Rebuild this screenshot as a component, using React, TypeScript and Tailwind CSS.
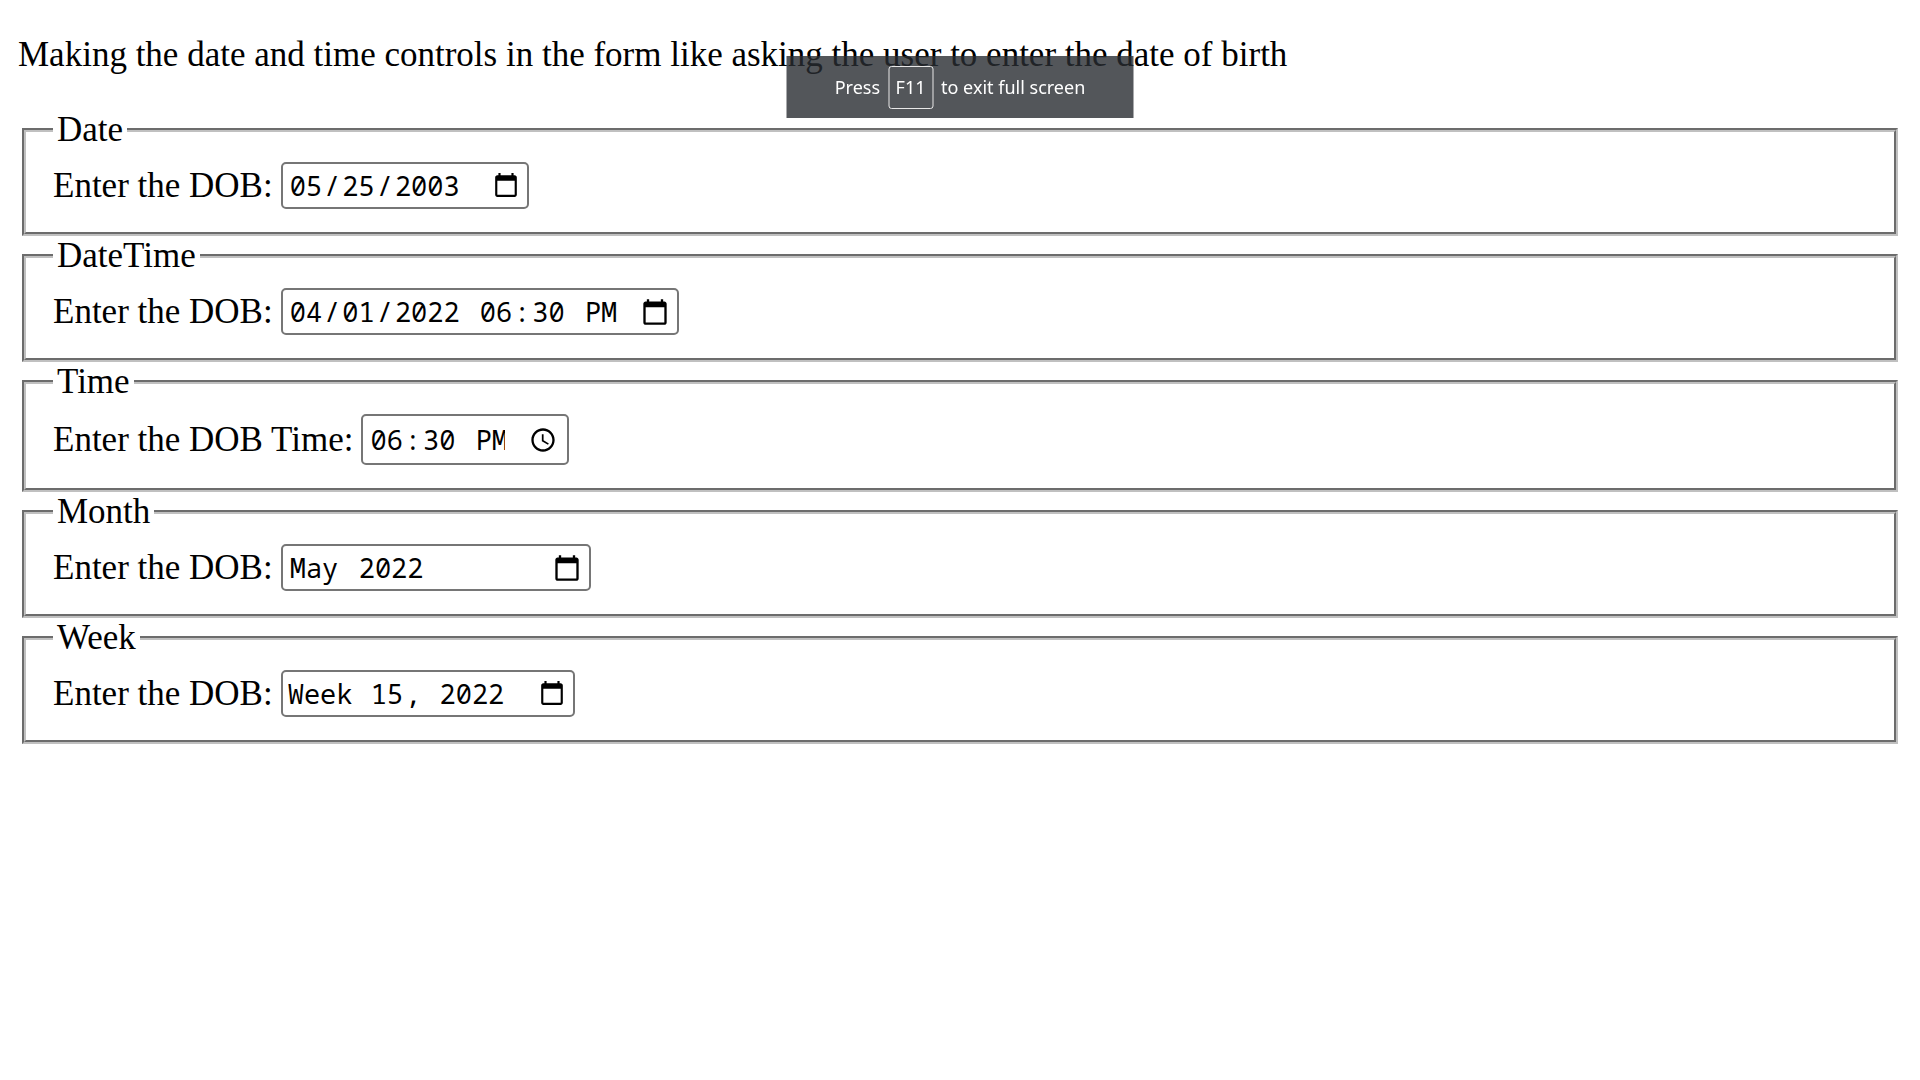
import React from 'react';

const mono = 'font-["Noto_Sans_Mono","DejaVu_Sans_Mono",monospace] text-[27px] leading-[43px] text-black';
const fields =
  '[&::-webkit-datetime-edit-month-field]:px-[2px] [&::-webkit-datetime-edit-day-field]:px-[2px] [&::-webkit-datetime-edit-year-field]:px-[2px] [&::-webkit-datetime-edit-hour-field]:px-[2px] [&::-webkit-datetime-edit-minute-field]:px-[2px] [&::-webkit-datetime-edit-ampm-field]:px-[2px] [&::-webkit-datetime-edit-week-field]:px-[2px]';
const picker = '[&::-webkit-calendar-picker-indicator]:size-[28px]';
const frame = 'rounded-[5px] border-2 border-[#767676] bg-white';

function Group({ title, children }: { title: string; children: React.ReactNode }) {
  return (
    <fieldset className="mx-1 border-4 border-[#c0c0c0] px-[27px] pt-3 pb-[23px] [border-style:groove]">
      <legend className="px-1">{title}</legend>
      <div className="flex items-center gap-2">{children}</div>
    </fieldset>
  );
}

function CalendarButton({ label }: { label: string }) {
  return (
    <button type="button" aria-label={label} className="shrink-0">
      <svg viewBox="0 0 24 24" className="size-[28px]" fill="black">
        <path d="M20 3h-1V1h-2v2H7V1H5v2H4c-1.1 0-2 .9-2 2v16c0 1.1.9 2 2 2h16c1.1 0 2-.9 2-2V5c0-1.1-.9-2-2-2zm0 18H4V8h16v13z" />
      </svg>
    </button>
  );
}

export default function App() {
  return (
    <main className="px-[18px] pt-[35px] font-['Liberation_Serif',serif] text-[35px] leading-[40px] text-black">
      <p className="mb-[35px]">
        Making the date and time controls in the form like asking the user to enter the date of birth
      </p>
      <form>
        <Group title="Date">
          <label htmlFor="date">Enter the DOB:</label>
          <input
            id="date"
            type="date"
            defaultValue="2003-05-25"
            className={`${mono} ${fields} ${picker} ${frame} h-[47px] w-[248px] px-[5px]`}
          />
        </Group>
        <Group title="DateTime">
          <label htmlFor="dt-date">Enter the DOB:</label>
          <div className={`${frame} flex h-[47px] w-[398px] items-center justify-between pr-2 pl-[5px]`}>
            <div className="flex gap-3">
              <input
                id="dt-date"
                type="date"
                defaultValue="2022-04-01"
                className={`${mono} ${fields} w-[178px] [&::-webkit-calendar-picker-indicator]:hidden`}
              />
              <input
                type="time"
                aria-label="Time of birth"
                defaultValue="18:30"
                className={`${mono} ${fields} w-[150px] [&::-webkit-calendar-picker-indicator]:hidden`}
              />
            </div>
            <CalendarButton label="Pick date and time" />
          </div>
        </Group>
        <Group title="Time">
          <label htmlFor="time">Enter the DOB Time:</label>
          <input
            id="time"
            type="time"
            defaultValue="18:30"
            className={`${mono} ${fields} ${picker} ${frame} h-[51px] w-[208px] pr-[7px] pl-[5px] [&::-webkit-calendar-picker-indicator]:ml-[21px]`}
          />
        </Group>
        <Group title="Month">
          <label htmlFor="month">Enter the DOB:</label>
          <div className={`${frame} flex h-[47px] w-[310px] items-center justify-between pr-2 pl-[5px]`}>
            <div className="flex gap-5">
              <select id="month" defaultValue="May" className={`${mono} appearance-none pl-[2px]`}>
                <option>May</option>
              </select>
              <input type="text" aria-label="Year" defaultValue="2022" className={`${mono} w-[72px]`} />
            </div>
            <CalendarButton label="Pick month" />
          </div>
        </Group>
        <Group title="Week">
          <label htmlFor="week">Enter the DOB:</label>
          <input
            id="week"
            type="week"
            defaultValue="2022-W15"
            className={`${mono} ${fields} ${picker} ${frame} h-[47px] w-[294px] px-[5px]`}
          />
        </Group>
      </form>
      <div className="fixed top-14 left-1/2 flex h-[62px] w-[347px] -translate-x-1/2 items-center justify-center gap-2 bg-[#282c31]/80 font-['Noto_Sans',sans-serif] text-lg text-white">
        <span>Press</span>
        <kbd className="flex h-[43px] w-[45px] items-center justify-center rounded-[3px] border border-[#e8e8e8] font-['Noto_Sans',sans-serif] text-lg">
          F11
        </kbd>
        <span>to exit full screen</span>
      </div>
    </main>
  );
}
